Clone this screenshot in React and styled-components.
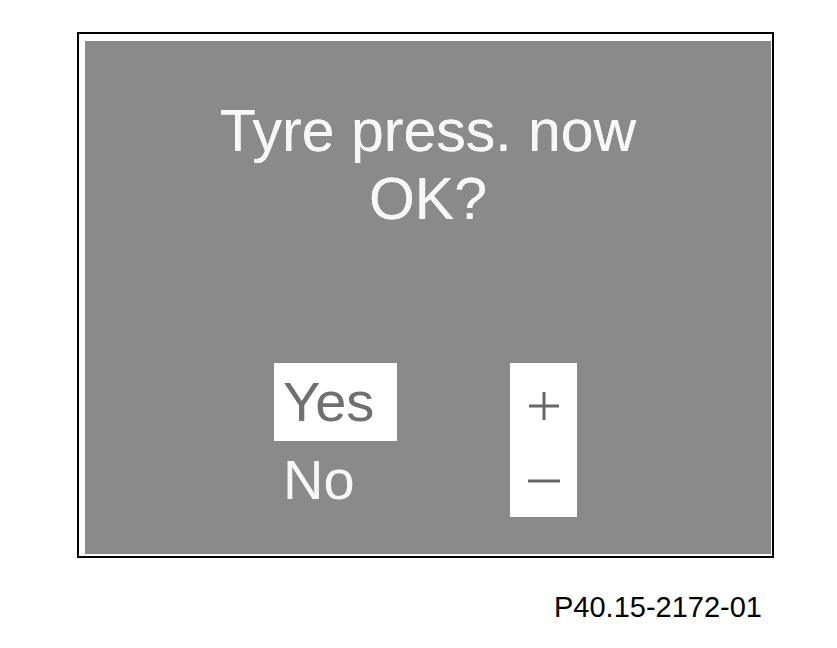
import styled, { createGlobalStyle } from "styled-components";

const GlobalStyle = createGlobalStyle`
  html, body {
    margin: 0;
    padding: 0;
    background: #ffffff;
  }
  body {
    font-family: "Liberation Sans", Arial, sans-serif;
  }
`;

const Page = styled.div`
  width: 837px;
  height: 648px;
  padding: 32px 0 0 77px;
  box-sizing: border-box;
`;

const Frame = styled.div`
  width: 697px;
  height: 526px;
  box-sizing: border-box;
  border: 2px solid #000;
  padding: 7px 1px 2px 6px;
`;

const Screen = styled.div`
  height: 100%;
  background: #8a8a8a;
  padding-top: 56px;
  box-sizing: border-box;
  display: flex;
  flex-direction: column;
`;

const Message = styled.div`
  color: #f7f7f7;
  font-size: 59px;
  line-height: 68px;
  text-align: center;
  text-shadow: 0 0 0.6px #f7f7f7;
`;

const Controls = styled.div`
  margin-top: 130px;
  margin-left: 189px;
  display: flex;
  gap: 113px;
`;

const Choices = styled.div`
  display: flex;
  flex-direction: column;
`;

const Choice = styled.div`
  width: 123px;
  height: 78px;
  box-sizing: border-box;
  padding-left: ${(p) => (p.selected ? "9px" : "9px")};
  font-size: 56px;
  line-height: 78px;
  background: ${(p) => (p.selected ? "#ffffff" : "transparent")};
  color: ${(p) => (p.selected ? "#707070" : "#f7f7f7")};
`;

const Adjust = styled.div`
  width: 67px;
  height: 154px;
  background: #ffffff;
  display: flex;
  flex-direction: column;
  align-items: center;
  padding-top: 28px;
  gap: 57px;
  box-sizing: border-box;
`;

const Caption = styled.div`
  margin-top: 32px;
  width: 685px;
  text-align: right;
  font-size: 29px;
  line-height: 34px;
  color: #000;
`;

const Plus = () => (
  <svg width="34" height="30" viewBox="0 0 34 30">
    <path d="M2 15 H32 M17 1 V29" stroke="#666" strokeWidth="3" fill="none" />
  </svg>
);

const Minus = () => (
  <svg width="34" height="6" viewBox="0 0 34 6">
    <path d="M1 3 H33" stroke="#666" strokeWidth="3" fill="none" />
  </svg>
);

export default function App() {
  return (
    <Page>
      <GlobalStyle />
      <Frame>
        <Screen>
          <Message>
            Tyre press. now
            <br />
            OK?
          </Message>
          <Controls>
            <Choices>
              <Choice selected>Yes</Choice>
              <Choice>No</Choice>
            </Choices>
            <Adjust>
              <Plus />
              <Minus />
            </Adjust>
          </Controls>
        </Screen>
      </Frame>
      <Caption>P40.15-2172-01</Caption>
    </Page>
  );
}
